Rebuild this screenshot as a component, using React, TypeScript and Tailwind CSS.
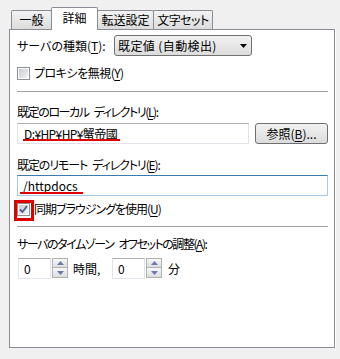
import React from "react";

function Checkbox({ checked }: { checked?: boolean }) {
  return (
    <span className="flex h-[13px] w-[13px] shrink-0 items-center justify-center border border-[#8e8f8f] bg-white p-px">
      <span className="relative flex h-full w-full items-center justify-center bg-gradient-to-br from-[#c7cbd2] to-[#f4f4f4]">
        {checked ? (
          <svg width="9" height="9" viewBox="0 0 9 9" className="absolute">
            <path d="M1 4.5 L3.5 7 L8 1" fill="none" stroke="#4a5f97" strokeWidth="1.8" />
          </svg>
        ) : null}
      </span>
    </span>
  );
}

function Mn({ children }: { children: React.ReactNode }) {
  return <span className="underline underline-offset-2">{children}</span>;
}

// a plain gap between words that negative tracking would otherwise eat
function Gap() {
  return <span className="inline-block w-[5px]" />;
}

function Spin({ value }: { value: string }) {
  return (
    <div className="flex h-[21px] items-stretch">
      <div className="flex w-[33px] items-center border border-[#e2e3ea] border-t-[#abadb3] bg-white pl-[5px]">
        {value}
      </div>
      <div className="ml-[1px] flex w-[16px] flex-col">
        <div className="flex h-[10px] items-center justify-center border border-[#adb2b5] bg-gradient-to-b from-[#f7f7f7] to-[#dedede]">
          <svg width="7" height="4" viewBox="0 0 7 4">
            <path d="M0 4 L3.5 0 L7 4 Z" fill="#6a7ca6" />
          </svg>
        </div>
        <div className="-mt-px flex h-[11px] items-center justify-center border border-[#adb2b5] bg-gradient-to-b from-[#f7f7f7] to-[#dedede]">
          <svg width="7" height="4" viewBox="0 0 7 4">
            <path d="M0 0 L3.5 4 L7 0 Z" fill="#6a7ca6" />
          </svg>
        </div>
      </div>
    </div>
  );
}

export default function App() {
  const tab =
    "flex h-[19px] mb-px items-center justify-center rounded-t-[2px] border border-b-0 border-[#898c95] bg-gradient-to-b from-[#f3f3f3] to-[#dcdcdc]";

  return (
    <div className="h-[359px] w-[340px] overflow-hidden bg-[#f0f0f0] font-['Noto_Sans_CJK_JP',sans-serif] text-[12px] leading-[16px] text-black [font-feature-settings:'palt']">
      {/* tabs */}
      <div className="relative z-10 ml-[11px] mt-[7px] -mb-px flex h-[23px] items-end">
        <div className={`${tab} w-[41px]`}>一般</div>
        <div className="relative z-10 -ml-px flex h-[23px] w-[47px] items-center justify-center rounded-t-[2px] border border-b-0 border-[#898c95] bg-white pb-[2px]">
          詳細
        </div>
        <div className={`${tab} -ml-px w-[57px]`}>転送設定</div>
        <div className={`${tab} -ml-px w-[60px] tracking-[-0.5px]`}>文字セット</div>
      </div>

      {/* panel */}
      <div className="ml-[9px] flex h-[319px] w-[326px] flex-col border border-[#898c95] bg-white pl-[7px] pr-[6px] shadow-[1px_0_0_#ffffff]">
        <div className="mt-[5px] flex h-[21px] items-center">
          <span className="w-[97px]">
            サーバの種類(<Mn>T</Mn>):
          </span>
          <div className="flex h-[21px] w-[138px] items-center justify-between rounded-[3px] border border-[#707070] bg-gradient-to-b from-[#f2f2f2] to-[#dcdcdc] pl-[3px] pr-[4px]">
            <span className="tracking-[0.4px]">既定値 (自動検出)</span>
            <svg width="7" height="4" viewBox="0 0 7 4">
              <path d="M0 0 L7 0 L3.5 4 Z" fill="#000" />
            </svg>
          </div>
        </div>

        <div className="mt-[10px] flex h-[14px] items-center gap-[4px]">
          <Checkbox />
          <span className="tracking-[-0.5px]">
            プロキシを無視(<Mn>Y</Mn>)
          </span>
        </div>

        <div className="mt-[11px] h-px bg-[#a0a0a0]" />

        <div className="mt-[12px] h-[16px] tracking-[-1.4px]">
          既定のローカル<Gap />ディレクトリ(<Mn>L</Mn>):
        </div>
        <div className="mt-[3px] flex h-[21px] items-center">
          <div className="relative flex h-[21px] w-[232px] items-center border border-[#e2e3ea] border-t-[#abadb3] pl-[6px] tracking-[-0.6px]">
            D:¥HP¥HP¥蟹帝國
            <span className="absolute left-[5px] top-[15px] h-[2px] w-[97px] bg-[#e00000]" />
          </div>
          <div className="ml-[6px] flex h-[21px] w-[73px] items-center justify-center rounded-[3px] border border-[#707070] bg-gradient-to-b from-[#f2f2f2] to-[#dcdcdc]">
            参照(<Mn>B</Mn>)...
          </div>
        </div>

        <div className="mt-[13px] h-[16px] tracking-[-1.1px]">
          既定のリモート<Gap />ディレクトリ(<Mn>E</Mn>):
        </div>
        <div className="relative mt-[2px] flex h-[21px] items-center border border-[#a4c9e3] border-t-[#3d7bad] pl-[5px]">
          /httpdocs
          <span className="absolute left-[2px] top-[16px] h-[2px] w-[63px] bg-[#e00000]" />
        </div>

        <div className="mt-[6px] flex h-[14px] items-center gap-[4px]">
          <span className="relative flex">
            <Checkbox checked />
            <span className="absolute left-[-3px] top-[-3px] h-[21px] w-[20px] border-[3px] border-[#e00000]" />
          </span>
          <span className="tracking-[-1px]">
            同期ブラウジングを使用(<Mn>U</Mn>)
          </span>
        </div>

        <div className="mt-[10px] h-px bg-[#a0a0a0]" />

        <div className="mt-[9px] h-[16px] tracking-[-1.45px]">
          サーバのタイムゾーン<Gap />オフセットの調整(<Mn>A</Mn>):
        </div>
        <div className="mt-[6px] flex h-[21px] items-center">
          <div className="ml-px">
            <Spin value="0" />
          </div>
          <span className="ml-[5px] w-[39px]">時間,</span>
          <Spin value="0" />
          <span className="ml-[6px]">分</span>
        </div>
      </div>
    </div>
  );
}
